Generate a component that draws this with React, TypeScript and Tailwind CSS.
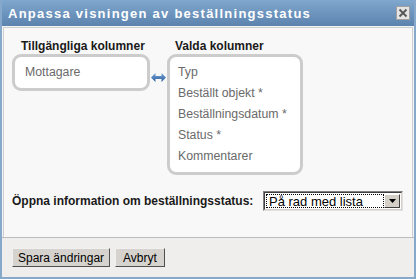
import React from "react";

export default function App() {
  const font = { fontFamily: '"Liberation Sans", Arial, sans-serif' };
  return (
    <div
      className="w-[416px] h-[279px] flex flex-col border-l-2 border-r-2 border-b-2 border-[#86a8cb] bg-[#efeeec] overflow-hidden"
      style={font}
    >
      {/* Title bar */}
      <div className="h-[26px] shrink-0 flex items-center justify-between pl-[6px] pr-[4px] bg-gradient-to-b from-[#80a7cd] to-[#5b83ae]">
        <span className="text-white font-bold text-[13px] tracking-[1.25px] leading-none">
          Anpassa visningen av beställningsstatus
        </span>
        <div className="w-[14px] h-[14px] bg-[#e4e4e4] border border-[#a0a0a0] flex items-center justify-center">
          <svg width="10" height="10" viewBox="0 0 10 10">
            <path d="M1.5 1.5 L8.5 8.5 M8.5 1.5 L1.5 8.5" stroke="#555" strokeWidth="1.8" />
          </svg>
        </div>
      </div>

      {/* Body */}
      <div className="flex-1 flex flex-col bg-[#f4f4f4] pt-[1px] px-[1px]">
        <div className="flex-1 border border-b-0 border-[#cfcfcf] bg-[#f8f8f8] flex flex-col">
          <div className="flex items-start pl-[8px] pt-[11px]">
            {/* Left column */}
            <div className="w-[138px] flex flex-col">
              <div className="pl-[9px] h-[15px] text-[12px] font-bold text-[#1a1a1a] leading-[15px] whitespace-nowrap">
                Tillgängliga kolumner
              </div>
              <div className="h-[37px] border-[3px] border-[#cccccc] rounded-[9px] bg-white pl-[10px] pt-[5px] text-[12.3px] leading-[21px] text-[#6a6a6a]">
                Mottagare
              </div>
            </div>
            {/* Arrow */}
            <div className="w-[17px] pt-[34px] flex justify-center">
              <svg width="15" height="9" viewBox="0 0 15 9">
                <defs>
                  <linearGradient id="ag" x1="0" y1="0" x2="0" y2="1">
                    <stop offset="0" stopColor="#7aa6d6" />
                    <stop offset="1" stopColor="#2a5e9e" />
                  </linearGradient>
                </defs>
                <path
                  d="M0 4.5 L4.5 0 L4.5 3 L10.5 3 L10.5 0 L15 4.5 L10.5 9 L10.5 6 L4.5 6 L4.5 9 Z"
                  fill="url(#ag)"
                />
              </svg>
            </div>
            {/* Right column */}
            <div className="w-[136px] flex flex-col">
              <div className="pl-[8px] h-[15px] text-[12px] font-bold text-[#1a1a1a] leading-[15px] whitespace-nowrap">
                Valda kolumner
              </div>
              <div className="h-[121px] border-[3px] border-[#cccccc] rounded-[9px] bg-white pl-[8px] pt-[5px] text-[12.3px] leading-[21px] text-[#6a6a6a] whitespace-nowrap">
                <div>Typ</div>
                <div>Beställt objekt *</div>
                <div>Beställningsdatum *</div>
                <div>Status *</div>
                <div>Kommentarer</div>
              </div>
            </div>
          </div>

          {/* Select row */}
          <div className="flex items-center pl-[8px] mt-[16px]">
            <span className="w-[251px] text-[12px] font-bold text-[#1a1a1a] whitespace-nowrap">
              Öppna information om beställningsstatus:
            </span>
            <div className="w-[140px] h-[20px] bg-white border border-t-[#808080] border-l-[#808080] border-r-[#e0e0e0] border-b-[#e0e0e0] flex">
              <div className="flex-1 flex border border-t-[#404040] border-l-[#404040] border-r-[#d4d0c8] border-b-[#d4d0c8] p-[1px]">
                <div className="flex-1 border border-dotted border-[#000] flex items-center pl-[2px] text-[13px] text-black leading-none">
                  På rad med lista
                </div>
                <div className="w-[16px] bg-[#d4d0c8] border border-t-white border-l-white border-r-[#404040] border-b-[#404040] flex items-center justify-center">
                  <svg width="7" height="4" viewBox="0 0 7 4">
                    <path d="M0 0 L7 0 L3.5 4 Z" fill="#000" />
                  </svg>
                </div>
              </div>
            </div>
          </div>
        </div>
      </div>

      {/* Footer */}
      <div className="h-[40px] shrink-0 border-t border-[#bcbcbc] bg-[#efeeec] flex items-start pl-[10px] pt-[10px] gap-[5px]">
        <button className="h-[19px] px-[5px] bg-[#d6d3ce] border border-t-[#f0f0f0] border-l-[#f0f0f0] border-r-[#505050] border-b-[#505050] text-[12px] text-black leading-none" style={font}>
          Spara ändringar
        </button>
        <button className="h-[19px] px-[7px] bg-[#d6d3ce] border border-t-[#f0f0f0] border-l-[#f0f0f0] border-r-[#505050] border-b-[#505050] text-[12px] text-black leading-none" style={font}>
          Avbryt
        </button>
      </div>
    </div>
  );
}
